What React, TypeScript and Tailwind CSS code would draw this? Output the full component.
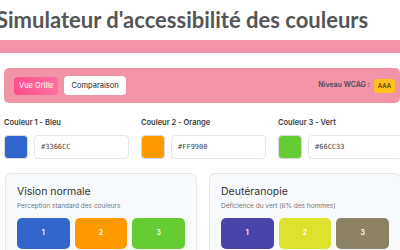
import React from "react";

const COLORS = [
  { label: "Couleur 1 - Bleu", hex: "#3366CC" },
  { label: "Couleur 2 - Orange", hex: "#FF9900" },
  { label: "Couleur 3 - Vert", hex: "#66CC33" },
];

const SIMS = [
  {
    title: "Vision normale",
    desc: "Perception standard des couleurs",
    swatches: ["#3366CC", "#FF9900", "#66CC33"],
  },
  {
    title: "Deutéranopie",
    desc: "Déficience du vert (6% des hommes)",
    swatches: ["#4a45ab", "#dde22c", "#8a8262"],
  },
];

export default function App() {
  return (
    <div className="w-[400px] h-[250px] overflow-hidden bg-white font-['Inter',sans-serif]">
      <div className="w-[412px]">
        <h1 className="-ml-[4px] pt-[6px] h-[40px] text-[22px] leading-[27px] font-bold text-[#555] font-['Lato',sans-serif] whitespace-nowrap">
          Simulateur d'accessibilité des couleurs
        </h1>
        <div className="h-[13px] bg-[#f194a7]" />

        <div className="mt-[15px] ml-[4px] w-[396px] h-[35px] rounded-[5px] bg-[#f194a7] flex items-center pl-[10px] pr-[5px] gap-[6px]">
          <button className="h-[18px] px-[5px] rounded-[4px] bg-gradient-to-r from-[#ff4d8a] to-[#ff6fa3] text-white text-[7.5px]">
            Vue Grille
          </button>
          <button className="h-[19px] px-[7px] rounded-[4px] bg-white text-[#222] text-[7.5px]">
            Comparaison
          </button>
          <div className="ml-auto flex items-center gap-[4px]">
            <span className="text-[7px] font-semibold text-[#4a4a5e]">Niveau WCAG :</span>
            <span className="h-[14px] px-[4px] rounded-[3px] bg-[#ffc21a] text-[6px] font-semibold text-[#5a4500] flex items-center">
              AAA
            </span>
          </div>
        </div>

        <div className="mt-[15px] ml-[4px] flex gap-[12px]">
          {COLORS.map((c) => (
            <div key={c.label} className="w-[125px]">
              <div className="text-[7.5px] font-semibold text-[#3a3a3a] leading-[10px] mb-[7px]">{c.label}</div>
              <div className="flex items-center gap-[6px]">
                <div
                  className="w-[24px] h-[24px] rounded-[4px] border border-[#d6dbe3] shrink-0"
                  style={{ backgroundColor: c.hex }}
                />
                <div className="flex-1 h-[24px] rounded-[4px] border border-[#e3e6ea] bg-white flex items-center px-[6px] text-[7px] text-[#444] font-['DejaVu_Sans_Mono',monospace]">
                  {c.hex}
                </div>
              </div>
            </div>
          ))}
        </div>

        <div className="mt-[14px] ml-[5px] flex gap-[12px]">
          {SIMS.map((s) => (
            <div
              key={s.title}
              className="w-[192px] h-[90px] rounded-[6px] border border-[#e4e7ec] bg-[#f8f9fb] px-[11px] pt-[11px]"
            >
              <div className="text-[10.5px] font-normal text-[#333] leading-[14px]">{s.title}</div>
              <div className="mt-[3px] text-[6.5px] text-[#777] leading-[9px]">{s.desc}</div>
              <div className="mt-[7px] flex gap-[5px]">
                {s.swatches.map((sw, i) => (
                  <div
                    key={i}
                    className="w-[53px] h-[31px] rounded-[5px] flex items-center justify-center text-white text-[7px] font-semibold"
                    style={{ backgroundColor: sw }}
                  >
                    {i + 1}
                  </div>
                ))}
              </div>
            </div>
          ))}
        </div>
      </div>
    </div>
  );
}
